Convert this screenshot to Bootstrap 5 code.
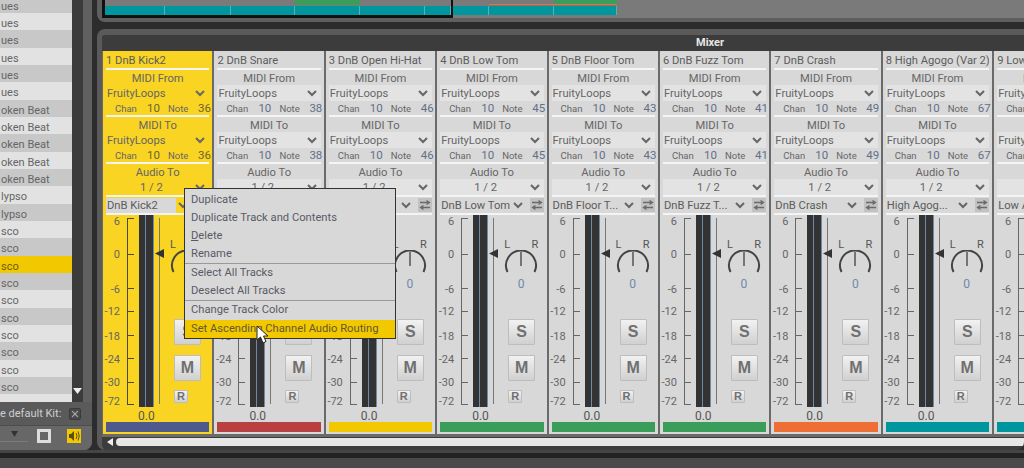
<!DOCTYPE html>
<html lang="en">
<head>
<meta charset="utf-8">
<title>Mixer</title>
<link href="https://cdn.jsdelivr.net/npm/bootstrap@5.3.0/dist/css/bootstrap.min.css" rel="stylesheet">
<style>
html,body{height:468px;overflow:hidden;}
body{background:#2c2c2c;font-family:Roboto,"Noto Sans",sans-serif;font-size:11px;color:#5a5a5a;line-height:1;position:relative;}
.shell{height:450px;}
.sidepane{width:92px;flex:0 0 92px;background:#606060;border-radius:0 0 8px 0;overflow:hidden;}
.listwrap{height:402px;}
.kitlist{width:72px;flex:0 0 72px;margin-top:-4.3px;overflow:hidden;border-radius:0;background:transparent;}
.kitlist .list-group-item{height:17.33px;flex:0 0 17.33px;padding:0 0 0 1px;border:0;border-radius:0;background:#e2e2e2;color:#666;font-size:11px;line-height:21px;white-space:nowrap;overflow:hidden;}
.kitlist .list-group-item:nth-child(odd){background:#c8c8c8;}
.kitlist .list-group-item.picked{background:#f2c900;color:#6b5d10;}
.vscroll{width:11px;flex:0 0 11px;background:#3b3b3b;}
.kitbar{height:23px;background:#5a5a5a;color:#cfcfcf;font-size:11px;padding-right:11px;white-space:nowrap;}
.toolbar{height:25px;background:#676767;border-top:1px solid #4d4d4d;padding:3px 11px 0 0;}
.rightpane{margin-left:5px;width:927px;flex:0 0 927px;}
.arrange{height:22px;background:#5f5f5f;border-radius:0 0 0 8px;padding-left:5px;overflow:hidden;}
.arrangeinner{height:18px;background:#7a7a7a;}
.selbox{width:351px;flex:0 0 351px;height:18px;border-left:3px solid #111;border-right:2px solid #111;border-bottom:3px solid #111;}
.clipstack{height:15px;}
.cliphead{height:5px;flex:0 0 5px;}
.clipbody{height:9px;flex:0 0 9px;margin-top:1px;background:#00969e;border-right:1px solid #5bb0b5;}
.cliphead.orange{background:linear-gradient(#3a9e5a 0 4px,#ee6f35 4px);}
.cliphead.redline{background:linear-gradient(transparent 0 4px,#ee6f35 4px);}
.cliphead.green{background:#3a9e5a;height:4px;flex-basis:5px;}
.mixerpane{height:421px;margin-top:7px;background:#3c3c3c;border-top:6px solid #5a5a5a;border-left:5px solid #5a5a5a;border-radius:8px 0 8px 8px;overflow:hidden;}
.mixertitle{height:16px;width:1216px;color:#e8e8e8;font-weight:700;font-size:11px;line-height:15px;text-align:center;}
.striprow{height:386px;background:#6a6a6a;padding-left:1px;gap:2px;width:1100px;}
.ch{width:109.4px;flex:0 0 109.4px;background:#d8d8d8;padding:0 3px;height:383px;}
.ch.active{background:#f9d423;}
.chtitle{height:17px;line-height:20px;font-size:11.2px;white-space:nowrap;padding-left:0;color:#5c5c5c;overflow:hidden;}
.rule{height:2px;flex:0 0 2px;background:#f4f4f4;}
.cap{height:15px;line-height:17px;font-size:11.2px;text-align:center;color:#666;}
.sel{height:16px;background:#e3e3e3;font-size:11.2px;line-height:16px;padding:1px 4px 0 1px;color:#666;white-space:nowrap;}
.active .sel{background:transparent;}
.sel.center span{padding-left:33px;}
.numrow{height:14px;display:grid;grid-template-columns:32px 21px 30px auto;padding-left:9px;padding-top:1px;align-items:center;font-size:9.5px;color:#666;}
.numrow b{font-weight:400;font-size:11.5px;color:#62708a;}
.active .numrow b{color:#6b6430;}
.namerow{height:16px;}
.namebox{width:90px;background:#d8d8d8;height:16px;line-height:16px;font-size:11.2px;padding:1px 7px 0 1px;color:#5c5c5c;white-space:nowrap;overflow:hidden;}
.active .namebox{background:transparent;}
.active .namebox span{background:#d8d8d8;display:inline-block;width:70px;margin-left:-1px;padding-left:1px;}
.swap{width:14px;height:14px;background:#c2c2c2;flex:0 0 14px;margin-top:1px;}
.meterarea{height:203px;position:relative;}
.scale{width:31px;flex:0 0 31px;position:relative;margin-left:-3px;}
.scaletick{position:absolute;right:0;height:1px;width:7px;background:#666;}
.scaletxt{position:absolute;right:14px;font-size:11px;line-height:11px;color:#666;white-space:nowrap;}
.bracket{position:absolute;right:6px;top:3px;height:187px;width:1px;background:#666;}
.active .scaletick,.active .bracket{background:#4a4a30;}
.vu{width:15px;flex:0 0 15px;height:192px;margin-left:5px;background:linear-gradient(90deg,#333 0 6px,#6e8aa8 6px 7px,#333 7px 14px,#6e8aa8 14px);}
.rail{width:10px;flex:0 0 10px;position:relative;height:192px;}
.rail i{position:absolute;left:5px;top:3px;width:1px;height:186px;background:#777;}
.rail svg{position:absolute;left:1px;top:34px;}
.panel{width:44px;flex:0 0 44px;margin-left:1px;}
.lr{width:34px;margin:24px auto 0;font-size:11px;line-height:11px;color:#555;}
.knob{display:block;margin:0 auto;}
.panval{text-align:center;font-size:12px;line-height:12px;margin-top:4px;color:#6e8aa8;height:12px;}
.mbtn.btn{--bs-btn-padding-x:0;--bs-btn-padding-y:0;width:27px;background:linear-gradient(#f2f2f2,#d0d0d0);border:1px solid #bdbdbd;border-radius:1px;color:#707070;font-weight:700;font-family:"Liberation Sans",sans-serif;display:block;margin-left:9px;}
.mbtn.bigbtn{height:26px;font-size:16px;line-height:24px;}
.sbtn{margin-top:29px;}
.mbtnm{margin-top:10px;}
.mbtn.rbtn{width:14px;height:13px;font-size:11px;line-height:11px;margin-top:9px;}
.peak{width:15px;margin-left:32px;text-align:center;height:12px;font-size:12px;line-height:12px;color:#555;white-space:nowrap;margin-top:-8px;}
.colorbar{height:10px;flex:0 0 10px;}
.hscroll{height:8px;margin-top:1px;background:#3c3c3c;width:1100px;padding-left:1px;}
.thumb{height:8px;flex:1;margin-left:3px;background:#e6e6e6;border-radius:4px 0 0 4px;}
.footerband{height:18px;background:linear-gradient(#454545 0 3px,#222 3px 8px,#4a4a4a 8px);}
.ctx.dropdown-menu{position:absolute;left:184px;top:188px;width:212px;height:151px;display:block;margin:0;padding:2px 0 0;background:#d8d8d8;border:1px solid #333;border-radius:0;z-index:5;min-width:0;}
.ctx .dropdown-item{height:18px;line-height:18px;padding:0 0 0 6px;color:#5a5a66;font-size:11.2px;white-space:nowrap;}
.ctx .dropdown-divider{margin:0;border-top:1px solid #999;opacity:1;height:1px;}
.ctx .dropdown-item.hot{background:#f2c900;color:#66582a;margin-top:1px;}
.pointer{position:absolute;left:255px;top:325px;z-index:6;}
.ghost{width:12px;height:12px;border:1px solid #3a3a3a;background:#4a4a4a;border-radius:2px;}
.trackline{width:28px;height:13px;border-bottom:1px solid #7c7c7c;}
</style>
</head>
<body>
<div class="shell d-flex">
  <div class="sidepane d-flex flex-column">
    <div class="listwrap d-flex overflow-hidden">
      <div class="kitlist list-group" id="kits"></div>
      <div class="vscroll d-flex flex-column justify-content-end align-items-center pb-2">
        <svg width="9" height="6" viewBox="0 0 9 6"><path d="M0 0H9L4.5 6Z" fill="#eee"/></svg>
      </div>
    </div>
    <div class="kitbar d-flex align-items-center justify-content-between">
      <span>e default Kit:</span>
      <svg class="ghost" viewBox="0 0 14 14"><path d="M3 3 11 11M11 3 3 11" stroke="#aaa" stroke-width="1.6"/></svg>
    </div>
    <div class="toolbar d-flex">
      <div class="trackline d-flex justify-content-center">
        <svg width="7" height="8" viewBox="0 0 7 8"><path d="M0 2H7L3.5 8Z" fill="#333"/></svg>
      </div>
      <svg class="ms-auto" width="14" height="14" viewBox="0 0 14 14"><rect width="14" height="14" fill="#ddd"/><rect x="3" y="3" width="8" height="8" fill="#666"/></svg>
      <svg class="ms-3" width="14" height="14" viewBox="0 0 14 14"><rect width="14" height="14" fill="#f2c900"/><path d="M2 5H4L7 2V12L4 9H2Z" fill="#5a4d10"/><path d="M9 4Q11 7 9 10M11 2.500Q13.500 7 11 11.500" fill="none" stroke="#5a4d10"/></svg>
    </div>
  </div>
  <div class="rightpane d-flex flex-column">
    <div class="arrange">
      <div class="arrangeinner d-flex" id="clips"></div>
    </div>
    <div class="mixerpane">
      <div class="mixertitle">Mixer</div>
      <div class="striprow d-flex" id="strips"></div>
      <div class="hscroll d-flex align-items-center">
        <svg class="ms-1" width="6" height="8" viewBox="0 0 6 8"><path d="M6 0V8L0 4Z" fill="#eee"/></svg>
        <div class="thumb"></div>
      </div>
    </div>
  </div>
</div>
<div class="footerband"></div>

<ul class="ctx dropdown-menu list-unstyled">
  <li><a class="dropdown-item" href="#">Duplicate</a></li>
  <li><a class="dropdown-item" href="#">Duplicate Track and Contents</a></li>
  <li><a class="dropdown-item" href="#"><u>D</u>elete</a></li>
  <li><a class="dropdown-item" href="#">Rename</a></li>
  <li class="dropdown-divider"></li>
  <li><a class="dropdown-item" href="#">Select All Tracks</a></li>
  <li><a class="dropdown-item" href="#">Deselect All Tracks</a></li>
  <li class="dropdown-divider"></li>
  <li><a class="dropdown-item" href="#">Change Track Color</a></li>
  <li><a class="dropdown-item hot" href="#">Set Ascending Channel Audio Routing</a></li>
</ul>
<svg class="pointer" width="15" height="20" viewBox="0 0 15 20"><path d="M2 1V15L5.500 12L8 18L11 16.500L8.500 11H13Z" fill="#fff" stroke="#222" stroke-width="1"/></svg>

<script src="https://cdn.jsdelivr.net/npm/bootstrap@5.3.0/dist/js/bootstrap.bundle.min.js"></script>
<script>
var kits=[];
var names=[["ues",6],["oken Beat",5],["lypso",2],["sco",10]];
names.forEach(function(n){for(var i=0;i<n[1];i++)kits.push(n[0]);});
document.getElementById('kits').innerHTML=kits.map(function(t,i){
  return '<div class="list-group-item'+(i==15?' picked':'')+'">'+t+'</div>';
}).join('')+'<div class="list-group-item"></div>';

var clipW=[60,66,64,65,65,26];
var inner=clipW.map(function(w,i){return '<div class="clipstack d-flex flex-column" style="width:'+w+'px"><div class="cliphead'+(i==3?' green':'')+'"></div><div class="clipbody"></div></div>';}).join('');
var after=[[36,''],[65,'redline'],[63,'orange']].map(function(c){return '<div class="clipstack d-flex flex-column" style="width:'+c[0]+'px"><div class="cliphead '+c[1]+'"></div><div class="clipbody"></div></div>';}).join('');
document.getElementById('clips').innerHTML='<div class="selbox d-flex">'+inner+'</div>'+after;

var strips=[
 ["1 DnB Kick2","DnB Kick2",36,"#4f5a8c"],
 ["2 DnB Snare","DnB Snare",38,"#b94040"],
 ["3 DnB Open Hi-Hat","DnB Open ...",46,"#f2c900"],
 ["4 DnB Low Tom","DnB Low Tom",45,"#3a9e5a"],
 ["5 DnB Floor Tom","DnB Floor T...",43,"#3a9e5a"],
 ["6 DnB Fuzz Tom","DnB Fuzz T...",41,"#3a9e5a"],
 ["7 DnB Crash","DnB Crash",49,"#ee6f35"],
 ["8 High Agogo (Var 2)","High Agog...",67,"#00969e"],
 ["9 Low Agogo (Var 2)","Low Agog...",67,"#00969e"]
];
var chev='<svg class="flex-shrink-0" width="10" height="7" viewBox="0 0 10 7"><path d="M1 1 5 5 9 1" fill="none" stroke="#666" stroke-width="2"/></svg>';
var ticks=[["6",1,3],["0",33.5,39],["-6",68.5,73],["-12",91,96],["-18",115.5,120],["-24",138.5,143],["-30",161.5,167],["-72",180.5,189]];
function midi(cap,n){return '<div class="cap">'+cap+'</div><div class="sel d-flex justify-content-between align-items-center"><span>FruityLoops</span>'+chev+'</div><div class="numrow"><span>Chan</span><b>10</b><span>Note</span><b>'+n+'</b></div><div class="rule"></div>';}
document.getElementById('strips').innerHTML=strips.map(function(s,i){
  var marks=ticks.map(function(t){
    return '<span class="scaletxt" style="top:'+t[1]+'px">'+t[0]+'</span><i class="scaletick" style="top:'+t[2]+'px"></i>';
  }).join('');
  return '<div class="ch d-flex flex-column'+(i==0?' active':'')+'">'+
   '<div class="chtitle">'+s[0]+'</div><div class="rule"></div>'+
   midi('MIDI From',s[2])+midi('MIDI To',s[2])+
   '<div class="cap">Audio To</div><div class="sel center d-flex justify-content-between align-items-center"><span>1 / 2</span>'+chev+'</div><div class="rule"></div>'+
   '<div class="namerow d-flex"><div class="namebox d-flex justify-content-between align-items-center"><span>'+s[1]+'</span>'+chev+'</div>'+
   '<svg class="swap" viewBox="0 0 14 14"><path d="M2 4.500H11M8.500 2.500 11.500 4.500 8.500 6.500M12 9.500H3M5.500 7.500 2.500 9.500 5.500 11.500" fill="none" stroke="#6a6a6a" stroke-width="1.300"/></svg></div><div class="rule"></div>'+
   '<div class="meterarea d-flex"><div class="scale"><i class="bracket"></i>'+marks+'</div><div class="vu"></div>'+
   '<div class="rail"><i></i><svg width="9" height="9" viewBox="0 0 9 9"><path d="M0 4.500 9 0V9Z" fill="#333"/></svg></div>'+
   '<div class="panel"><div class="lr d-flex justify-content-between"><span>L</span><span>R</span></div>'+
   '<svg class="knob" width="34" height="24" viewBox="0 0 34 24"><path d="M3.500 22A15 15 0 1 1 30.500 22" fill="none" stroke="#444" stroke-width="2"/><path d="M17 2V16" stroke="#555" stroke-width="1.500"/></svg>'+
   '<div class="panval">0</div>'+
   '<button class="btn mbtn bigbtn sbtn">S</button><button class="btn mbtn bigbtn mbtnm">M</button><button class="btn mbtn rbtn">R</button></div></div>'+
   '<div class="peak">0.0</div><div class="colorbar" style="background:'+s[3]+'"></div></div>';
}).join('');
</script>
</body>
</html>
